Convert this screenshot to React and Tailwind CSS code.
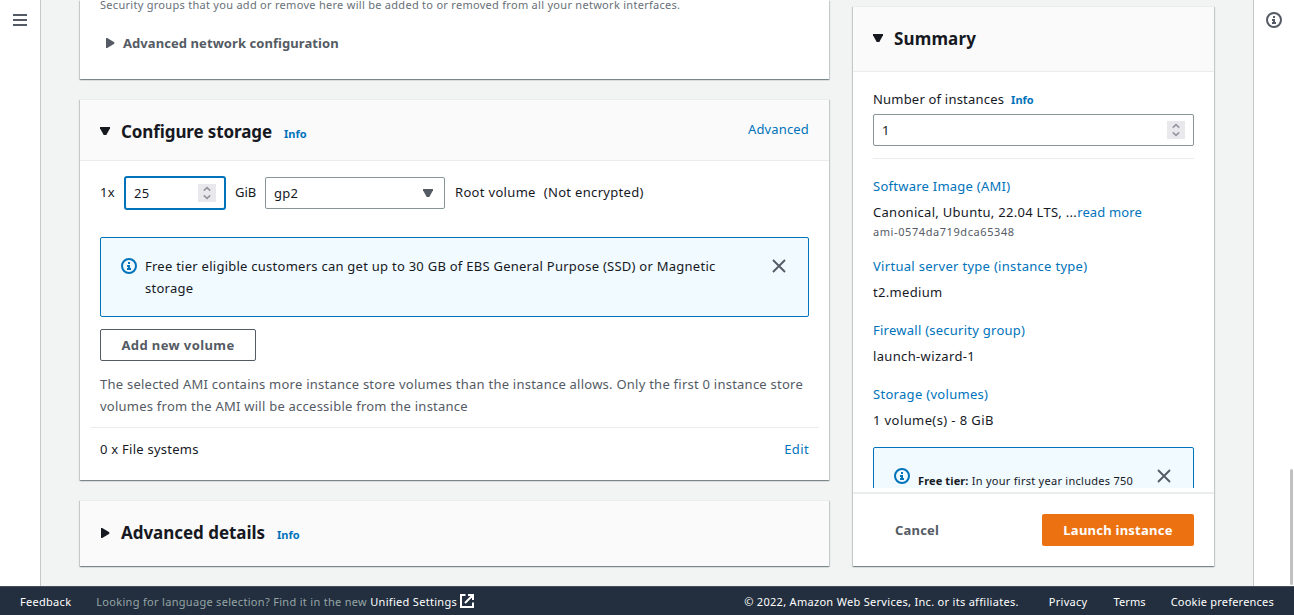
const cardShadow =
  'shadow-[0_1px_1px_0_rgba(0,28,36,0.3),1px_1px_1px_0_rgba(0,28,36,0.15),-1px_1px_1px_0_rgba(0,28,36,0.15)]'
const cardClass = `bg-white border-t border-[#eaeded] ${cardShadow}`

function CaretDown({ className = '' }) {
  return (
    <svg width="10" height="9" viewBox="0 0 10 9" className={className} fill="currentColor">
      <path d="M0 0h10v1.2L6.3 8H3.7L0 1.2z" />
    </svg>
  )
}

function CaretRight({ className = '' }) {
  return (
    <svg width="9" height="10" viewBox="0 0 9 10" className={className} fill="currentColor">
      <path d="M0 0h1.2L8.3 4.3v1.4L1.2 10H0z" />
    </svg>
  )
}

function InfoIcon({ className = '' }) {
  return (
    <svg width="16" height="16" viewBox="0 0 16 16" className={className} fill="none" stroke="currentColor" strokeWidth="2">
      <circle cx="8" cy="8" r="7" />
      <path d="M8 11V8H6M10 11H6M8 6V4" />
    </svg>
  )
}

function CloseIcon({ className = '' }) {
  return (
    <svg width="16" height="16" viewBox="0 0 16 16" className={className} fill="none" stroke="#545b64" strokeWidth="1.9">
      <path d="m2 2 12 12M14 2 2 14" />
    </svg>
  )
}

function Stepper({ className = '' }) {
  return (
    <span className={`flex h-[18px] w-[18px] items-center justify-center bg-[#e9e9ed] ${className}`}>
      <svg width="8" height="14" viewBox="0 0 8 14" fill="none" stroke="#94939f" strokeWidth="1.6">
        <path d="M0.8 4.6 4 1.6l3.2 3M0.8 9.4 4 12.4l3.2-3" />
      </svg>
    </span>
  )
}

function SummaryItem({ title, children }) {
  return (
    <div className="mb-[16px]">
      <div className="h-[22px] text-[#0073bb]">{title}</div>
      <div className="mt-1 h-[22px]">{children}</div>
    </div>
  )
}

const info = 'font-bold text-[11px] tracking-[0px] text-[#0073bb]'

export default function App() {
  return (
    <div className="flex h-[615px] w-full flex-col overflow-hidden bg-[#f2f3f3] font-['Noto_Sans',sans-serif] text-[13px] leading-[22px] tracking-[0.25px] text-[#16191f]">
      <div className="flex h-[586px]">
        <nav className="h-full w-10 shrink-0 bg-white pt-[14px] pl-[13px] shadow-[1px_0_0_0_#c3c8ca]">
          <svg width="14" height="12" viewBox="0 0 14 12" fill="#545b64">
            <path d="M0 0h14v2H0zM0 5h14v2H0zM0 10h14v2H0z" />
          </svg>
        </nav>

        <main className="ml-10 flex h-full w-[749px] flex-col">
          <section className={`bg-white ${cardShadow} h-[79px] px-5`}>
            <div className="h-[10px] text-[11px] leading-[10px] tracking-[0.285px] whitespace-nowrap text-[#687078]">
              Security groups that you add or remove here will be added to or removed from all your network interfaces.
            </div>
            <div className="mt-[22px] flex h-[22px] items-center pl-[6px] font-bold text-[#545b64]">
              <CaretRight />
              <span className="ml-[8px] tracking-[0.07px]">Advanced network configuration</span>
            </div>
          </section>

          <section className={`${cardClass} mt-5 h-[381px]`}>
            <header className="flex h-[61px] items-center border-b border-[#eaeded] bg-[#fafafa] px-5">
              <CaretDown className="mt-[2px]" />
              <h2 className="mt-[3px] ml-[11px] text-[17px] font-bold tracking-[-0.1px]">Configure storage</h2>
              <span className={`${info} mt-[7px] ml-[12px]`}>Info</span>
              <a className="mt-[-2px] ml-auto tracking-[0.15px] text-[#0073bb]">Advanced</a>
            </header>
            <div className="px-5 pt-4">
              <div className="flex h-8 items-center">
                <span className="-mt-[2px] w-[25px]">1x</span>
                <div className="flex h-8 w-[100px] items-center rounded-[2px] border border-[#0073bb] bg-white pr-2 pl-2 shadow-[0_0_0_1px_#0073bb]">
                  <span className="-mt-px">25</span>
                  <Stepper className="ml-auto" />
                </div>
                <span className="-mt-[2px] ml-[10px] w-[30px] tracking-[-0.05px]">GiB</span>
                <div className="flex h-8 w-[180px] items-center rounded-[2px] border border-[#879596] px-[8px]">
                  <span className="-mt-px">gp2</span>
                  <CaretDown className="mr-[3px] ml-auto text-[#545b64]" />
                </div>
                <span className="-mt-[2px] ml-[10px] tracking-[0.32px]">Root volume</span>
                <span className="-mt-[2px] ml-[8px] tracking-[0.32px]">(Not encrypted)</span>
              </div>

              <div className="mt-7 flex h-20 rounded-[2px] border border-[#0073bb] bg-[#f1faff] pt-[17px] pr-[21px] pl-5">
                <InfoIcon className="mt-[3px] shrink-0 text-[#0073bb]" />
                <p className="ml-2 w-[600px] tracking-[0.255px]">
                  Free tier eligible customers can get up to 30 GB of EBS General Purpose (SSD) or Magnetic
                  <br />
                  storage
                </p>
                <CloseIcon className="mt-[3px] ml-auto" />
              </div>

              <button className="mt-3 flex h-8 w-[156px] items-center justify-center rounded-[2px] border border-[#545b64] font-bold tracking-[0.4px] text-[#545b64]">
                Add new volume
              </button>

              <p className="mt-3 whitespace-nowrap tracking-[0.24px] text-[#545b64]">
                The selected AMI contains more instance store volumes than the instance allows. Only the first 0 instance store
                <br />
                volumes from the AMI will be accessible from the instance
              </p>
              <div className="-mx-[10px] mt-[10px] flex justify-between border-t border-[#eaeded] px-[10px] pt-[10px]">
                <span>0 x File systems</span>
                <a className="tracking-[0.4px] text-[#0073bb]">Edit</a>
              </div>
            </div>
          </section>

          <section className={`${cardClass} mt-5 h-[66px]`}>
            <header className="flex h-[65px] items-center bg-[#fafafa] px-5">
              <CaretRight className="-mt-[2px] ml-[1px]" />
              <h2 className="-mt-px ml-[11px] text-[17px] font-bold tracking-[-0.04px]">Advanced details</h2>
              <span className={`${info} mt-[3px] ml-[12px]`}>Info</span>
            </header>
          </section>
        </main>

        <aside className={`${cardClass} mt-[6px] ml-6 flex h-[560px] w-[361px] flex-col`}>
          <header className="flex h-[65px] shrink-0 items-center border-b border-[#eaeded] bg-[#fafafa] px-5">
            <CaretDown className="-mt-px" />
            <h2 className="ml-[11px] text-[17px] font-bold tracking-[0.13px]">Summary</h2>
          </header>
          <div className="h-[416px] shrink-0 overflow-hidden px-5 pt-4">
            <div className="flex h-[22px] items-center">
              <span className="tracking-[0.2px]">Number of instances</span>
              <span className={`${info} mt-px ml-[7px]`}>Info</span>
            </div>
            <div className="mt-1 flex h-8 items-center rounded-[2px] border border-[#879596] pr-2 pl-2">
              <span>1</span>
              <Stepper className="ml-auto" />
            </div>
            <div className="mt-3 border-t border-[#eaeded] pt-4">
              <div className="h-[22px] text-[#0073bb]">Software Image (AMI)</div>
              <div className="mt-1 h-[22px] tracking-[0.29px]">
                Canonical, Ubuntu, 22.04 LTS, ...<a className="tracking-[0.15px] text-[#0073bb]">read more</a>
              </div>
              <div className="mb-[16px] h-4 text-[11px] leading-[18px] tracking-[0.58px] text-[#545b64]">ami-0574da719dca65348</div>
              <SummaryItem title={<span className="tracking-[0.3px]">Virtual server type (instance type)</span>}>
                <span className="tracking-[0.32px]">t2.medium</span>
              </SummaryItem>
              <SummaryItem title="Firewall (security group)">
                <span className="tracking-[0.35px]">launch-wizard-1</span>
              </SummaryItem>
              <SummaryItem title={<span className="tracking-[0.3px]">Storage (volumes)</span>}>
                <span className="tracking-[0.4px]">1 volume(s) - 8 GiB</span>
              </SummaryItem>
            </div>
            <div className="flex h-20 rounded-[2px] border border-[#0073bb] bg-[#f1faff] pt-5 pr-[21px] pl-5">
              <InfoIcon className="shrink-0 text-[#0073bb]" />
              <p className="mt-[6px] ml-2 h-[14px] text-[11px] leading-[14px] tracking-[0.27px] whitespace-nowrap">
                <b className="tracking-[0.12px]">Free tier:</b> In your first year includes 750
              </p>
              <CloseIcon className="ml-auto" />
            </div>
          </div>
          <footer className="mt-[4px] flex h-[74px] items-center justify-between border-t-2 border-[#eaeded] pr-5 pl-[42px] font-bold">
            <button className="tracking-[0.2px] text-[#545b64]">Cancel</button>
            <button className="h-8 w-[152px] rounded-[2px] bg-[#ec7211] tracking-[0.24px] text-white">Launch instance</button>
          </footer>
        </aside>

        <aside className="ml-auto flex h-full w-10 shrink-0 justify-between bg-white shadow-[-1px_0_0_0_#c3c8ca]">
          <InfoIcon className="mt-3 ml-3 text-[#545b64]" />
          <div className="mt-[469px] mr-[1px] h-[116px] w-[3px] rounded-full bg-[#c1c1c1]" />
        </aside>
      </div>

      <footer className="flex h-[29px] items-center border-t border-[#444e5a] bg-[#232f3e] px-5 pt-[2px] text-[11px] tracking-[0.29px] whitespace-nowrap text-white">
        <span>Feedback</span>
        <span className="ml-[25px] tracking-[0.305px] text-[#95a5a6]">
          Looking for language selection? Find it in the new <a className="text-white">Unified Settings</a>
        </span>
        <svg width="14" height="14" viewBox="0 0 14 14" className="-mt-[2px] ml-[3px]" fill="none" stroke="currentColor" strokeWidth="2">
          <path d="M5.5 1H1v12h12V8.5M8 1h5v5M13 1 5 9" />
        </svg>
        <span className="ml-auto tracking-[0.3px]">© 2022, Amazon Web Services, Inc. or its affiliates.</span>
        <span className="ml-[30px]">Privacy</span>
        <span className="ml-[26px] tracking-[0.1px]">Terms</span>
        <span className="ml-[25px] tracking-[0.22px]">Cookie preferences</span>
      </footer>
    </div>
  )
}
